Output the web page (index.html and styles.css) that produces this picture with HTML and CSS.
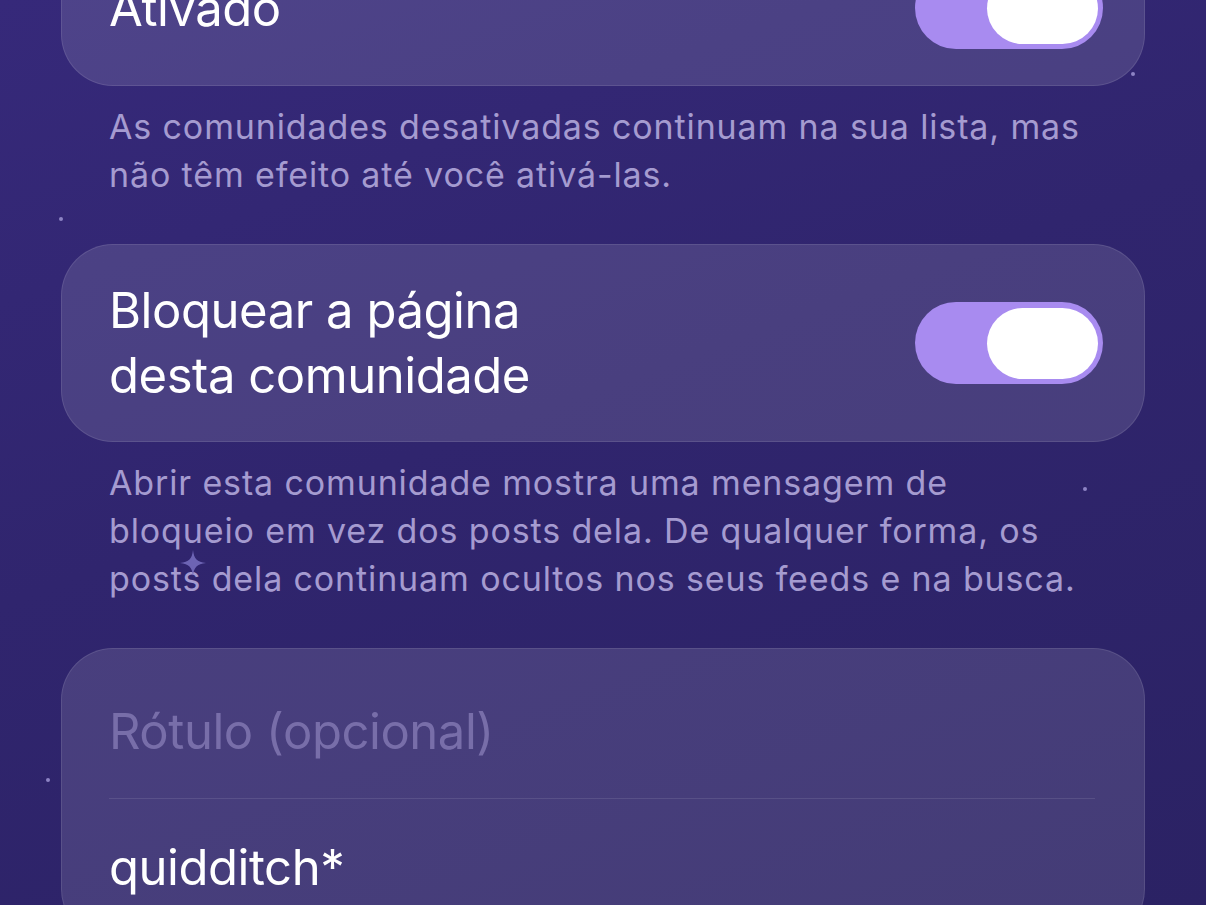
FILE: index.html
```html
<!DOCTYPE html>
<html lang="pt-BR">
<head>
    <meta charset="UTF-8">
    <meta name="viewport" content="width=device-width, initial-scale=1.0">
    <title>Comunidade</title>
    <link rel="stylesheet" href="styles.css">
</head>
<body>
    <div class="dot" style="top: 72px; left: 1131px;"></div>
    <div class="dot" style="top: 217px; left: 59px;"></div>
    <div class="dot" style="top: 487px; left: 1083px;"></div>
    <div class="dot" style="top: 778px; left: 46px;"></div>
    <svg class="sparkle" width="28" height="28" viewBox="0 0 28 28">
        <path d="M14 1 C15 10 18 13 27 14 C18 15 15 18 14 27 C13 18 10 15 1 14 C10 13 13 10 14 1 Z" fill="#6d64b4"/>
    </svg>

    <div class="page">
        <div class="card card-first">
            <div class="row">
                <span class="label">Ativado</span>
                <div class="toggle"><div class="knob"></div></div>
            </div>
        </div>
        <p class="footnote">As comunidades desativadas continuam na sua lista, mas<br>não têm efeito até você ativá-las.</p>

        <div class="card">
            <div class="row">
                <span class="label">Bloquear a página<br>desta comunidade</span>
                <div class="toggle"><div class="knob"></div></div>
            </div>
        </div>
        <p class="footnote">Abrir esta comunidade mostra uma mensagem de<br>bloqueio em vez dos posts dela. De qualquer forma, os<br>posts dela continuam ocultos nos seus feeds e na busca.</p>

        <div class="card form">
            <div class="field placeholder">Rótulo (opcional)</div>
            <div class="field value">quidditch*</div>
        </div>
    </div>
</body>
</html>
```

FILE: styles.css
```css
body {
    margin: 0;
    padding: 0;
    height: 905px;
    overflow: hidden;
    background: linear-gradient(160deg, #36297a 0%, #30256e 45%, #2b2264 100%);
    color: white;
    font-family: Inter, "Noto Sans", sans-serif;
    position: relative;
}

.dot {
    position: absolute;
    width: 4px;
    height: 4px;
    border-radius: 50%;
    background: #8d84c4;
}

.sparkle {
    position: absolute;
    top: 549px;
    left: 179px;
}

.page {
    padding: 0 61px;
}

.card {
    background: rgba(255, 255, 255, 0.12);
    border: 1.5px solid rgba(255, 255, 255, 0.1);
    border-radius: 52px;
    box-sizing: border-box;
}

.card-first {
    margin-top: -70px;
    height: 156px;
    display: flex;
    align-items: center;
}

.card-first .row {
    flex: 1;
    padding-top: 0;
    padding-bottom: 0;
}

.row {
    display: flex;
    align-items: center;
    justify-content: space-between;
    padding: 33px 41px 33px 47px;
}

.label {
    font-size: 49px;
    line-height: 65px;
    letter-spacing: -0.45px;
}

.toggle {
    width: 188px;
    height: 82px;
    border-radius: 41px;
    background: #a88bf0;
    position: relative;
    flex-shrink: 0;
}

.knob {
    position: absolute;
    right: 5px;
    top: 6px;
    width: 111px;
    height: 71px;
    border-radius: 36px;
    background: white;
}

.footnote {
    margin: 0;
    padding: 17px 0 45px 48px;
    font-size: 34px;
    line-height: 48px;
    color: #a59bd0;
    letter-spacing: 0.87px;
    white-space: nowrap;
}

.form {
    padding: 0 48px 0 47px;
}

.field {
    font-size: 49px;
    line-height: 65px;
    letter-spacing: -0.45px;
}

.placeholder {
    padding: 50px 0 34px;
    color: #786ea9;
    border-bottom: 1.5px solid rgba(255, 255, 255, 0.1);
    margin-right: 1px;
}

.value {
    padding: 36px 0 40px;
}
```
